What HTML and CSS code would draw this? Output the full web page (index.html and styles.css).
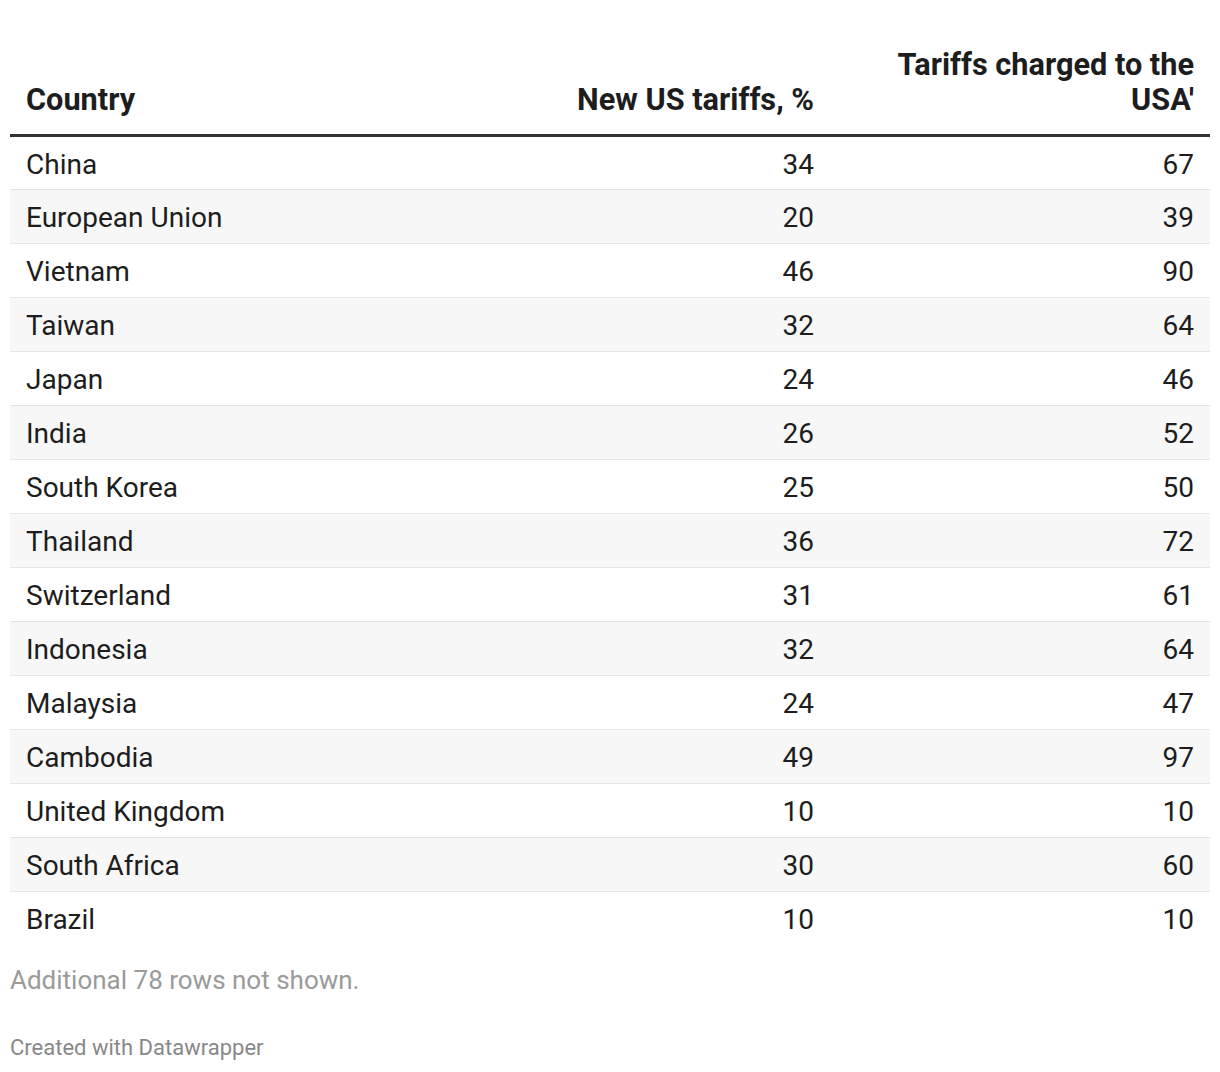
FILE: index.html
```html
<!DOCTYPE html>
<html>
<head>
<meta charset="utf-8">
<link rel="stylesheet" href="styles.css">
</head>
<body>
<div class="chart">
  <table class="tbl">
    <colgroup><col class="c1"><col class="c2"><col class="c3"></colgroup>
    <thead>
      <tr><th class="left">Country</th><th class="right">New US tariffs, %</th><th class="right">Tariffs charged to the USA'</th></tr>
    </thead>
    <tbody>
      <tr><td>China</td><td class="num">34</td><td class="num">67</td></tr>
      <tr><td>European Union</td><td class="num">20</td><td class="num">39</td></tr>
      <tr><td>Vietnam</td><td class="num">46</td><td class="num">90</td></tr>
      <tr><td>Taiwan</td><td class="num">32</td><td class="num">64</td></tr>
      <tr><td>Japan</td><td class="num">24</td><td class="num">46</td></tr>
      <tr><td>India</td><td class="num">26</td><td class="num">52</td></tr>
      <tr><td>South Korea</td><td class="num">25</td><td class="num">50</td></tr>
      <tr><td>Thailand</td><td class="num">36</td><td class="num">72</td></tr>
      <tr><td>Switzerland</td><td class="num">31</td><td class="num">61</td></tr>
      <tr><td>Indonesia</td><td class="num">32</td><td class="num">64</td></tr>
      <tr><td>Malaysia</td><td class="num">24</td><td class="num">47</td></tr>
      <tr><td>Cambodia</td><td class="num">49</td><td class="num">97</td></tr>
      <tr><td>United Kingdom</td><td class="num">10</td><td class="num">10</td></tr>
      <tr><td>South Africa</td><td class="num">30</td><td class="num">60</td></tr>
      <tr><td>Brazil</td><td class="num">10</td><td class="num">10</td></tr>
    </tbody>
  </table>
  <p class="more">Additional 78 rows not shown.</p>
  <p class="credit">Created with Datawrapper</p>
</div>
</body>
</html>
```
FILE: styles.css
```css
html, body {
  margin: 0;
  padding: 0;
  background: #fff;
}
body {
  font-family: Roboto, "Liberation Sans", sans-serif;
  color: #1d1d1d;
}
.chart {
  padding: 47px 10px 0 10px;
}
.tbl {
  width: 1200px;
  border-collapse: collapse;
  table-layout: fixed;
}
.c1 { width: 420px; }
.c2 { width: 400px; }
.c3 { width: 380px; }
.tbl th {
  font-size: 30.7px;
  font-weight: 700;
  line-height: 35px;
  padding: 0 16px 17px 16px;
  vertical-align: bottom;
  border-bottom: 3px solid #333;
  color: #1d1d1d;
}
.tbl th.left { text-align: left; }
.tbl th.right { text-align: right; }
.tbl td {
  font-size: 28px;
  line-height: 36px;
  height: 54px;
  padding: 3px 16px 0 16px;
  box-sizing: border-box;
  border-bottom: 1px solid #e5e5e5;
  vertical-align: middle;
}
.tbl tbody tr:nth-child(even) td { background: #f7f7f7; }
.tbl tbody tr:last-child td { border-bottom: none; }
.tbl td.num { text-align: right; }
.more {
  margin: 19px 0 0 0;
  font-size: 26px;
  line-height: 30px;
  color: #9a9a9a;
}
.credit {
  margin: 39px 0 0 0;
  font-size: 22px;
  line-height: 28px;
  color: #888;
}
```
